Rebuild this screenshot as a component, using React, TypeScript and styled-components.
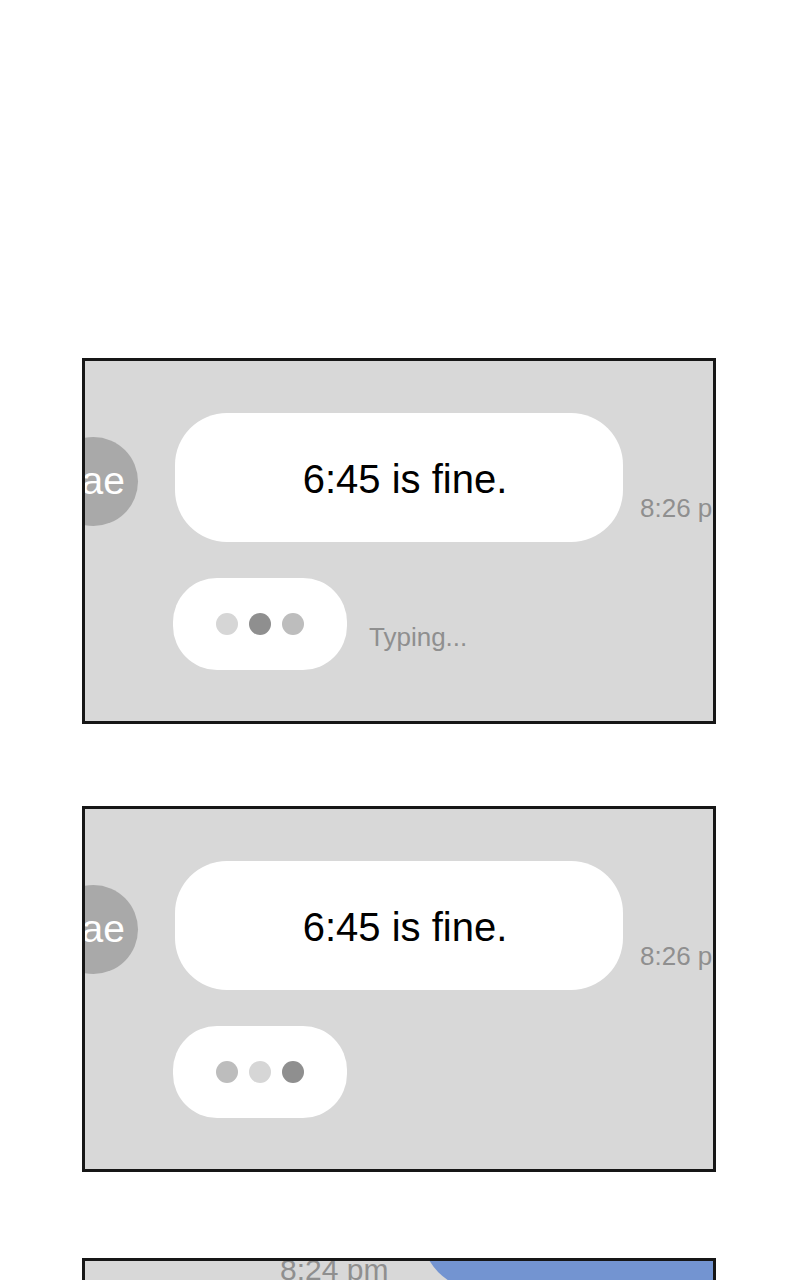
import styled, { createGlobalStyle } from 'styled-components';

const GlobalStyle = createGlobalStyle`
  html, body {
    margin: 0;
    padding: 0;
    background: #ffffff;
    font-family: 'Liberation Sans', Arial, sans-serif;
  }
`;

type DotTone = 'light' | 'mid' | 'dark';

const dotColors: Record<DotTone, string> = {
  light: '#d6d6d6',
  mid: '#bdbdbd',
  dark: '#8f8f8f',
};

const Page = styled.div`
  display: flex;
  flex-direction: column;
  gap: 82px;
  padding: 358px 0 0 82px;
`;

const Panel = styled.section<{ $offset?: number }>`
  box-sizing: border-box;
  width: 634px;
  height: 366px;
  margin-top: ${(p) => p.$offset || 0}px;
  border: 3px solid #161616;
  background: #d8d8d8;
  overflow: hidden;
  flex-shrink: 0;
`;

const ChatArea = styled.div`
  display: flex;
  flex-direction: column;
  padding-top: 52px;
`;

const MessageRow = styled.div`
  display: flex;
  align-items: center;
`;

const Avatar = styled.div`
  flex-shrink: 0;
  box-sizing: border-box;
  width: 89px;
  height: 89px;
  margin: 7px 0 0 -36px;
  border-radius: 50%;
  background: #a9a9a9;
  color: #ffffff;
  font-size: 39px;
  display: flex;
  align-items: center;
  justify-content: flex-end;
  padding-right: 13px;
`;

const Bubble = styled.div`
  flex-shrink: 0;
  box-sizing: border-box;
  width: 448px;
  height: 129px;
  margin-left: 37px;
  padding: 4px 0 0 12px;
  border-radius: 52px;
  background: #ffffff;
  color: #000000;
  font-size: 40px;
  display: flex;
  align-items: center;
  justify-content: center;
`;

const Stamp = styled.span<{ $size?: number }>`
  flex-shrink: 0;
  white-space: nowrap;
  color: #8f8f8f;
  font-size: ${(p) => p.$size || 26}px;
`;

const SideStamp = styled(Stamp)`
  align-self: flex-end;
  margin: 0 0 18px 17px;
`;

const TypingRow = styled.div`
  display: flex;
  align-items: flex-end;
  margin: 36px 0 0 88px;
`;

const TypingBubble = styled.div`
  flex-shrink: 0;
  width: 174px;
  height: 92px;
  border-radius: 44px;
  background: #ffffff;
  display: flex;
  align-items: center;
  justify-content: center;
  gap: 11px;
`;

const Dot = styled.span<{ $tone: DotTone }>`
  width: 22px;
  height: 22px;
  border-radius: 50%;
  background: ${(p) => dotColors[p.$tone]};
`;

const TypingLabel = styled(Stamp)`
  margin: 0 0 17px 22px;
`;

const ReplyRow = styled.div`
  display: flex;
  align-items: flex-end;
  margin-top: -91px;
`;

const ReplyStamp = styled(Stamp)`
  margin: 0 0 3px 195px;
`;

const BlueBubble = styled.div`
  flex-shrink: 0;
  width: 400px;
  height: 120px;
  margin-left: 33px;
  border-radius: 60px;
  background: #7394d1;
`;

interface ChatPanelProps {
  dots: DotTone[];
  typing?: boolean;
}

const ChatPanel = ({ dots, typing }: ChatPanelProps) => (
  <Panel>
    <ChatArea>
      <MessageRow>
        <Avatar>ae</Avatar>
        <Bubble>6:45 is fine.</Bubble>
        <SideStamp>8:26 pm</SideStamp>
      </MessageRow>
      <TypingRow>
        <TypingBubble>
          {dots.map((tone, i) => (
            <Dot key={i} $tone={tone} />
          ))}
        </TypingBubble>
        {typing && <TypingLabel>Typing...</TypingLabel>}
      </TypingRow>
    </ChatArea>
  </Panel>
);

const App = () => (
  <>
    <GlobalStyle />
    <Page>
      <ChatPanel dots={['light', 'dark', 'mid']} typing />
      <ChatPanel dots={['mid', 'light', 'dark']} />
      <Panel $offset={4}>
        <ReplyRow>
          <ReplyStamp $size={30}>8:24 pm</ReplyStamp>
          <BlueBubble />
        </ReplyRow>
      </Panel>
    </Page>
  </>
);

export default App;
